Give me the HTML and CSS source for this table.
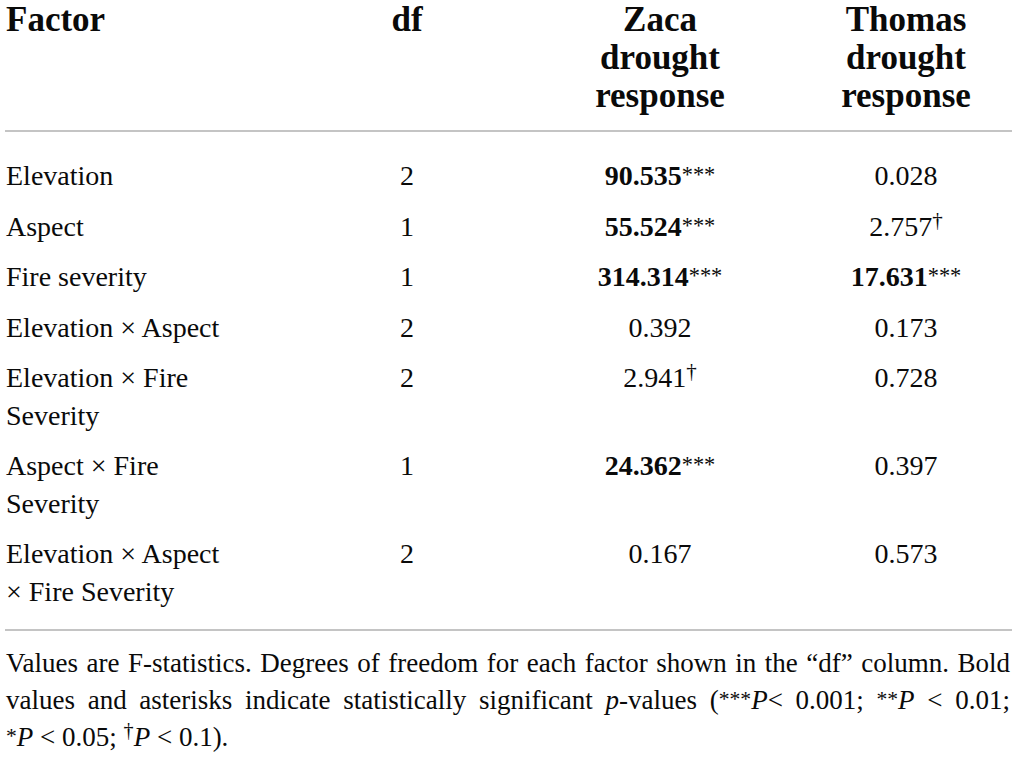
FILE: index.html
```html
<!DOCTYPE html>
<html lang="en">
<head>
<meta charset="utf-8">
<title>ANOVA table</title>
<link rel="stylesheet" href="styles.css">
</head>
<body>
<div class="page">
  <table class="anova">
    <colgroup>
      <col class="c-factor">
      <col class="c-df">
      <col class="c-zaca">
      <col class="c-thomas">
    </colgroup>
    <thead>
      <tr>
        <th class="factor">Factor</th>
        <th class="num">df</th>
        <th class="num">Zaca<br>drought<br>response</th>
        <th class="num thomas">Thomas<br>drought<br>response</th>
      </tr>
    </thead>
    <tbody>
      <tr class="first">
        <td class="factor">Elevation</td>
        <td class="num">2</td>
        <td class="num"><b>90.535</b><span class="ast">***</span></td>
        <td class="num thomas">0.028</td>
      </tr>
      <tr>
        <td class="factor">Aspect</td>
        <td class="num">1</td>
        <td class="num"><b>55.524</b><span class="ast">***</span></td>
        <td class="num thomas">2.757<sup class="dag">†</sup></td>
      </tr>
      <tr>
        <td class="factor">Fire severity</td>
        <td class="num">1</td>
        <td class="num"><b>314.314</b><span class="ast">***</span></td>
        <td class="num thomas"><b>17.631</b><span class="ast">***</span></td>
      </tr>
      <tr>
        <td class="factor">Elevation × Aspect</td>
        <td class="num">2</td>
        <td class="num">0.392</td>
        <td class="num thomas">0.173</td>
      </tr>
      <tr>
        <td class="factor">Elevation × Fire Severity</td>
        <td class="num">2</td>
        <td class="num">2.941<sup class="dag">†</sup></td>
        <td class="num thomas">0.728</td>
      </tr>
      <tr>
        <td class="factor">Aspect × Fire Severity</td>
        <td class="num">1</td>
        <td class="num"><b>24.362</b><span class="ast">***</span></td>
        <td class="num thomas">0.397</td>
      </tr>
      <tr class="last">
        <td class="factor">Elevation × Aspect × Fire Severity</td>
        <td class="num">2</td>
        <td class="num">0.167</td>
        <td class="num thomas">0.573</td>
      </tr>
    </tbody>
  </table>
  <div class="note">
    <span class="line just">Values are F-statistics. Degrees of freedom for each factor shown in the “df” column. Bold</span>
    <span class="line just">values and asterisks indicate statistically significant <i>p</i>-values (<span class="ast">***</span><i>P</i>&lt; 0.001; <span class="ast">**</span><i>P</i> &lt; 0.01;</span>
    <span class="line"><span class="ast">*</span><i>P</i> &lt; 0.05; <sup class="dag">†</sup><i>P</i> &lt; 0.1).</span>
  </div>
</div>
</body>
</html>
```

FILE: styles.css
```css
html, body {
  margin: 0;
  padding: 0;
  background: #ffffff;
}

body {
  font-family: "Liberation Serif", "Times New Roman", serif;
  color: #0a0a0a;
  font-size: 28px;
}

.page {
  padding: 0 5px;
  width: 1007px;
}

.anova {
  width: 1007px;
  border-collapse: collapse;
  table-layout: fixed;
}

.c-factor { width: 276px; }
.c-df { width: 252px; }
.c-zaca { width: 254px; }
.c-thomas { width: 225px; }

.anova th {
  font-weight: bold;
  font-size: 35px;
  line-height: 38px;
  padding: 1px 0 15px;
  vertical-align: top;
  border-bottom: 2px solid #c4c4c4;
}

.anova td {
  line-height: 37.5px;
  padding: 6px 0 7px;
  vertical-align: top;
}

.anova .factor {
  text-align: left;
  padding-left: 1px;
  padding-right: 50px;
}

.anova .num {
  text-align: center;
}

.anova .thomas {
  padding-left: 13px;
}

.anova tr.first td {
  padding-top: 25px;
}

.anova tr.last td {
  padding-bottom: 19px;
  border-bottom: 2px solid #c4c4c4;
}

.ast {
  font-weight: normal;
  font-size: 0.8em;
  line-height: 0;
  position: relative;
  top: -0.12em;
}

.dag {
  font-size: 0.75em;
  line-height: 0;
  vertical-align: 0.45em;
}

.note {
  margin-top: 14px;
  padding: 0 2px 0 1px;
  font-size: 27px;
  line-height: 37px;
}

.note .line {
  display: block;
}

.note .just {
  text-align: justify;
  text-align-last: justify;
}
```
